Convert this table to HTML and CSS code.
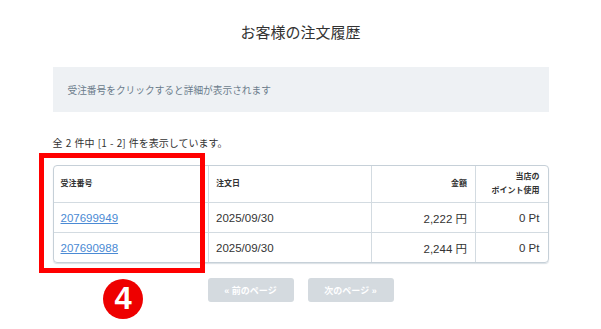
FILE: index.html
```html
<!DOCTYPE html>
<html lang="ja">
<head>
<meta charset="utf-8">
<link rel="stylesheet" href="styles.css">
</head>
<body>
<div class="page">
  <h1 class="title">お客様の注文履歴</h1>
  <div class="notice">受注番号をクリックすると詳細が表示されます</div>
  <p class="count">全 2 件中 [1 - 2] 件を表示しています。</p>
  <div class="table-wrap">
    <table class="orders">
      <colgroup>
        <col class="c1"><col class="c2"><col class="c3"><col class="c4">
      </colgroup>
      <thead>
        <tr>
          <th class="left">受注番号</th>
          <th class="left">注文日</th>
          <th class="right">金額</th>
          <th class="right">当店の<br>ポイント使用</th>
        </tr>
      </thead>
      <tbody>
        <tr>
          <td class="left"><a href="#" class="order-link">207699949</a></td>
          <td class="left">2025/09/30</td>
          <td class="right">2,222 円</td>
          <td class="right">0 Pt</td>
        </tr>
        <tr>
          <td class="left"><a href="#" class="order-link">207690988</a></td>
          <td class="left">2025/09/30</td>
          <td class="right">2,244 円</td>
          <td class="right">0 Pt</td>
        </tr>
      </tbody>
    </table>
  </div>
  <div class="pager">
    <span class="btn">« 前のページ</span>
    <span class="btn">次のページ »</span>
  </div>
</div>
<div class="annot-box"></div>
<div class="annot-num">4</div>
</body>
</html>
```
FILE: styles.css
```css
html, body {
  margin: 0;
  padding: 0;
  background: #ffffff;
}
body {
  position: relative;
  width: 601px;
  height: 329px;
  overflow: hidden;
  font-family: "Liberation Sans", "Noto Sans CJK JP", sans-serif;
  color: #333333;
}
.page {
  width: 496px;
  margin: 0 auto;
  padding-top: 23px;
}
.title {
  margin: 0;
  font-size: 15px;
  line-height: 20px;
  font-weight: normal;
  text-align: center;
  color: #333333;
}
.notice {
  margin-top: 24px;
  height: 45px;
  display: flex;
  align-items: center;
  padding-left: 15px;
  background: #eef1f4;
  font-size: 9.7px;
  color: #6b7c8b;
}
.count {
  margin: 24px 0 0;
  font-family: "Noto Sans CJK JP", sans-serif;
  font-size: 10px;
  line-height: 14px;
  word-spacing: 1px;
  color: #333333;
}
.table-wrap {
  margin-top: 15px;
  border: 1px solid #c6d0d8;
  border-radius: 4px;
  overflow: hidden;
  box-shadow: 0 1px 1px rgba(150, 165, 180, 0.35);
}
.orders {
  width: 100%;
  border-collapse: collapse;
  table-layout: fixed;
}
.c1 { width: 155px; }
.c2 { width: 163px; }
.c3 { width: 104px; }
.orders th,
.orders td {
  padding: 0 8px 0 7px;
  vertical-align: middle;
  border-left: 1px solid #d3dbe1;
}
.orders th:first-child,
.orders td:first-child {
  border-left: none;
}
.orders th {
  height: 36px;
  font-size: 8px;
  line-height: 14px;
  font-weight: bold;
  color: #333333;
}
.orders td {
  height: 29px;
  border-top: 1px solid #d3dbe1;
  font-size: 11.5px;
  color: #333333;
}
.orders .left { text-align: left; }
.orders .right { text-align: right; }
.order-link {
  color: #4a8ad4;
  text-decoration: underline;
}
.pager {
  margin-top: 15px;
  display: flex;
  justify-content: center;
  gap: 14px;
}
.btn {
  width: 86px;
  height: 24px;
  display: flex;
  align-items: center;
  justify-content: center;
  background: #d4dadf;
  border-radius: 3px;
  font-size: 9px;
  font-weight: bold;
  color: #ffffff;
}
.annot-box {
  position: absolute;
  left: 39px;
  top: 153px;
  width: 156px;
  height: 110px;
  border: 5px solid #ff0000;
}
.annot-num {
  position: absolute;
  left: 103px;
  top: 279px;
  width: 40px;
  height: 40px;
  border-radius: 50%;
  background: #ee0000;
  color: #ffffff;
  font-family: "Liberation Sans", sans-serif;
  font-weight: bold;
  font-size: 31px;
  line-height: 40px;
  text-align: center;
}
```
